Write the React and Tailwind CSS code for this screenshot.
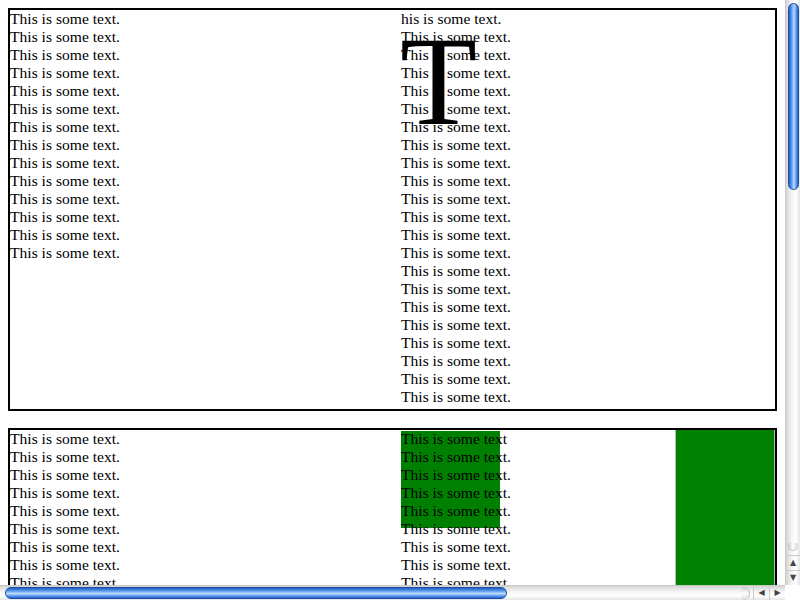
import React from "react";

// plain lines of "This is some text."
const Lines = ({ n, first }) => (
  <>
    {first && <div className="h-[18px] leading-[18px] whitespace-nowrap">{first}</div>}
    {Array.from({ length: n }).map((_, i) => (
      <div key={i} className="h-[18px] leading-[18px] whitespace-nowrap">
        This is some text.
      </div>
    ))}
  </>
);

const thumbV =
  "bg-[linear-gradient(to_right,#1f5fc4,#5d9bf0_30%,#b9dafc_55%,#5d9bf0_80%,#1f5fc4)]";
const thumbH =
  "bg-[linear-gradient(to_bottom,#1f5fc4,#5d9bf0_30%,#b9dafc_55%,#5d9bf0_80%,#1f5fc4)]";

export default function App() {
  return (
    <div className="w-[800px] h-[600px] overflow-hidden bg-white grid grid-cols-[785px_15px] grid-rows-[585px_15px] font-['Liberation_Serif',serif] text-[15.6px] text-black">
      {/* page viewport */}
      <div className="overflow-hidden p-2">
        {/* first box: two columns, big T */}
        <div className="border-2 border-black h-[403px] flex">
          <div className="w-[391px]">
            <Lines n={14} />
          </div>
          <div className="flex-1 relative">
            <Lines n={21} first="his is some text." />
            <div className="absolute left-[-1px] top-[9px] text-[126px] leading-none select-none">T</div>
          </div>
        </div>

        {/* second box: green floats under the text */}
        <div className="border-2 border-black mt-[17px] h-[400px] flex relative">
          <div className="w-[391px] relative z-10">
            <Lines n={12} />
          </div>
          <div className="flex-1 relative">
            <div className="absolute left-0 top-[1px] w-[99px] h-[97px] bg-[#008000]" />
            <div className="absolute right-0 top-0 w-[100px] h-[400px] bg-[#008000] border-x border-[#b8b8b8]" />
            <div className="relative">
              <Lines n={11} first="This is some text" />
            </div>
          </div>
        </div>
      </div>

      {/* vertical scrollbar */}
      <div className="flex flex-col bg-[linear-gradient(to_right,#d4d4d4,#f4f4f4_40%,#ffffff_70%,#e4e4e4)] border-l border-[#c8c8c8]">
        <div className="flex-1 pt-[3px] px-[2px] pb-[4px] flex flex-col">
          <div className={`h-[187px] w-[11px] rounded-full border border-[#1b4ea8] ${thumbV}`} />
          <div className="flex-1" />
          <div className="h-[8px] rounded-b-full bg-[linear-gradient(to_right,#c8c8c8,#ffffff,#d8d8d8)] border-b border-[#bbb]" />
        </div>
        <div className="h-[15px] flex items-center justify-center text-[8px] leading-none text-[#444] border-t border-[#ccc] font-['DejaVu_Sans',sans-serif]">▲</div>
        <div className="h-[15px] flex items-center justify-center text-[8px] leading-none text-[#444] border-t border-[#ccc] font-['DejaVu_Sans',sans-serif]">▼</div>
      </div>

      {/* horizontal scrollbar */}
      <div className="flex bg-[linear-gradient(to_bottom,#d4d4d4,#f4f4f4_40%,#ffffff_70%,#e4e4e4)] border-t border-[#c8c8c8]">
        <div className="flex-1 pl-[5px] pr-[3px] py-[1px] flex items-center">
          <div className={`w-[502px] h-[12px] rounded-full border border-[#1b4ea8] ${thumbH}`} />
          <div className="flex-1" />
          <div className="w-[8px] h-[13px] rounded-r-full bg-[linear-gradient(to_bottom,#c8c8c8,#ffffff,#d8d8d8)] border-r border-[#bbb]" />
        </div>
        <div className="w-[16px] flex items-center justify-center text-[8px] leading-none text-[#444] border-l border-[#ccc] font-['DejaVu_Sans',sans-serif]">◀</div>
        <div className="w-[16px] flex items-center justify-center text-[8px] leading-none text-[#444] border-l border-[#ccc] font-['DejaVu_Sans',sans-serif]">▶</div>
      </div>

      {/* corner */}
      <div className="bg-white" />
    </div>
  );
}
